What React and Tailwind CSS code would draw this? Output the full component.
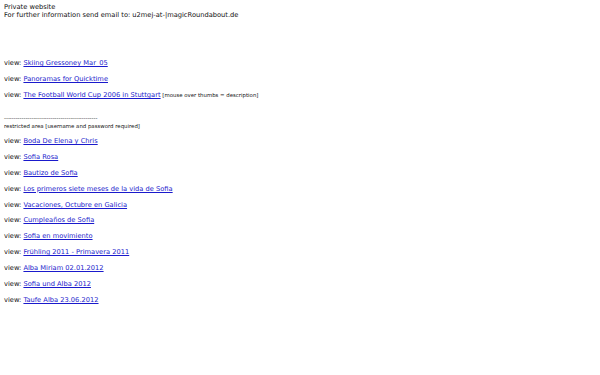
import React from 'react'

const publicLinks = [
    { label: 'Skiing Gressoney Mar_05' },
    { label: 'Panoramas for Quicktime' },
    { label: 'The Football World Cup 2006 in Stuttgart', note: '[mouse over thumbs = description]' },
]

const privateLinks = [
    'Boda De Elena y Chris',
    'Sofia Rosa',
    'Bautizo de Sofia',
    'Los primeros siete meses de la vida de Sofia',
    'Vacaciones, Octubre en Galicia',
    'Cumpleaños de Sofia',
    'Sofia en movimiento',
    'Frühling 2011 - Primavera 2011',
    'Alba Miriam 02.01.2012',
    'Sofia und Alba 2012',
    'Taufe Alba 23.06.2012',
]

const ViewRow = ({ label, note }) => (
    <div className="h-[8px] leading-[8px] whitespace-nowrap">
        view: <a href="#" className="text-[#1a1acc] underline">{label}</a>
        {note && <span className="text-[5.4px]"> {note}</span>}
    </div>
)

export default function App() {
    return (
        <div
            className="w-[600px] h-[375px] bg-white text-[#111] text-[6.7px] px-[4px] pt-[3px]"
            style={{ fontFamily: '"DejaVu Sans", Verdana, sans-serif' }}
        >
            <div className="leading-[8px]">Private website</div>
            <div className="leading-[8px]">For further information send email to: u2mej-at-|magicRoundabout.de</div>

            {/* public galleries */}
            <div className="mt-[40px] flex flex-col gap-[8px]">
                {publicLinks.map(l => <ViewRow key={l.label} {...l} />)}
            </div>

            <div className="mt-[15px] text-[5.4px] leading-[8px] whitespace-nowrap">------------------------------------------------</div>
            <div className="text-[5.4px] leading-[8px]">restricted area [username and password required]</div>

            {/* restricted galleries */}
            <div className="mt-[7px] flex flex-col gap-[7.9px]">
                {privateLinks.map(l => <ViewRow key={l} label={l} />)}
            </div>
        </div>
    )
}
